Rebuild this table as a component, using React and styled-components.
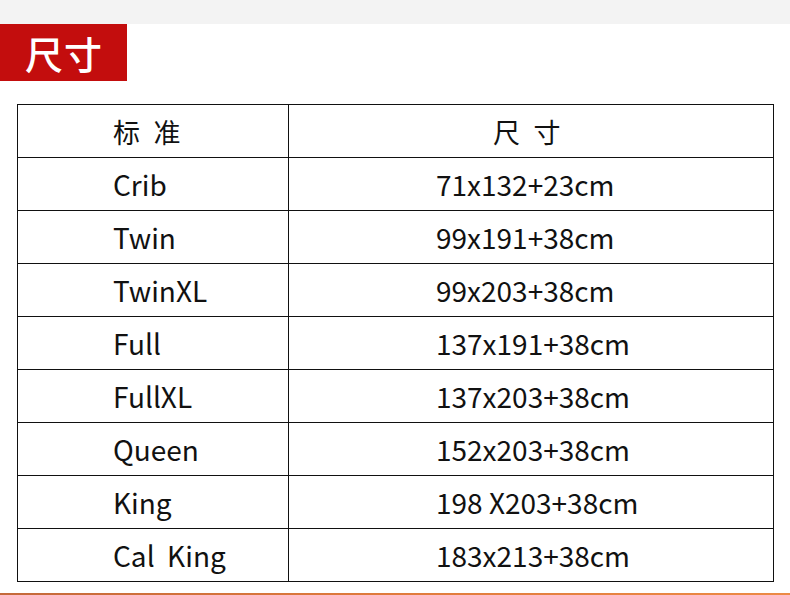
import React from "react";
import styled, { createGlobalStyle } from "styled-components";

const GlobalStyle = createGlobalStyle`
  html, body {
    margin: 0;
    padding: 0;
    background: #fff;
  }
  body {
    font-family: "Noto Sans CJK SC", "Noto Sans", sans-serif;
  }
`;

const Page = styled.div`
  width: 790px;
  height: 595px;
  display: flex;
  flex-direction: column;
  overflow: hidden;
  background: #fff;
`;

const TopBand = styled.div`
  height: 24px;
  background: #f3f3f3;
`;

const Label = styled.div`
  width: 127px;
  height: 57px;
  background: #c30d0d;
  color: #fff;
  font-size: 38px;
  font-weight: 500;
  line-height: 57px;
  padding-left: 25px;
  box-sizing: border-box;
  letter-spacing: 1px;
`;

const Table = styled.table`
  margin: 23px 0 0 17px;
  width: 757px;
  border-collapse: collapse;
  color: #111;
`;

const Row = styled.tr`
  height: 53px;
`;

const Cell = styled.td`
  border: 1px solid #111;
  padding: 0 0 0 ${(p) => p.$indent}px;
  font-size: ${(p) => (p.$head ? "27px" : "28px")};
  line-height: 1;
  vertical-align: middle;
  text-align: left;
  width: ${(p) => (p.$first ? "271px" : "auto")};
  box-sizing: border-box;
  white-space: pre;
`;

const BottomLine = styled.div`
  margin-top: auto;
  height: 2px;
  background: linear-gradient(90deg, #c4693a, #e07b3c 50%, #ec8a45);
`;

const rows = [
  ["Crib", "71x132+23cm"],
  ["Twin", "99x191+38cm"],
  ["TwinXL", "99x203+38cm"],
  ["Full", "137x191+38cm"],
  ["FullXL", "137x203+38cm"],
  ["Queen", "152x203+38cm"],
  ["King", "198 X203+38cm"],
  ["Cal  King", "183x213+38cm"],
];

export default function App() {
  return (
    <Page>
      <GlobalStyle />
      <TopBand />
      <Label>尺寸</Label>
      <Table>
        <tbody>
          <Row>
            <Cell $first $head $indent={95}>标{"\u2002"}准</Cell>
            <Cell $head $indent={204}>尺{"\u2002"}寸</Cell>
          </Row>
          {rows.map(([name, size]) => (
            <Row key={name}>
              <Cell $first $indent={95}>{name}</Cell>
              <Cell $indent={147}>{size}</Cell>
            </Row>
          ))}
        </tbody>
      </Table>
      <BottomLine />
    </Page>
  );
}
